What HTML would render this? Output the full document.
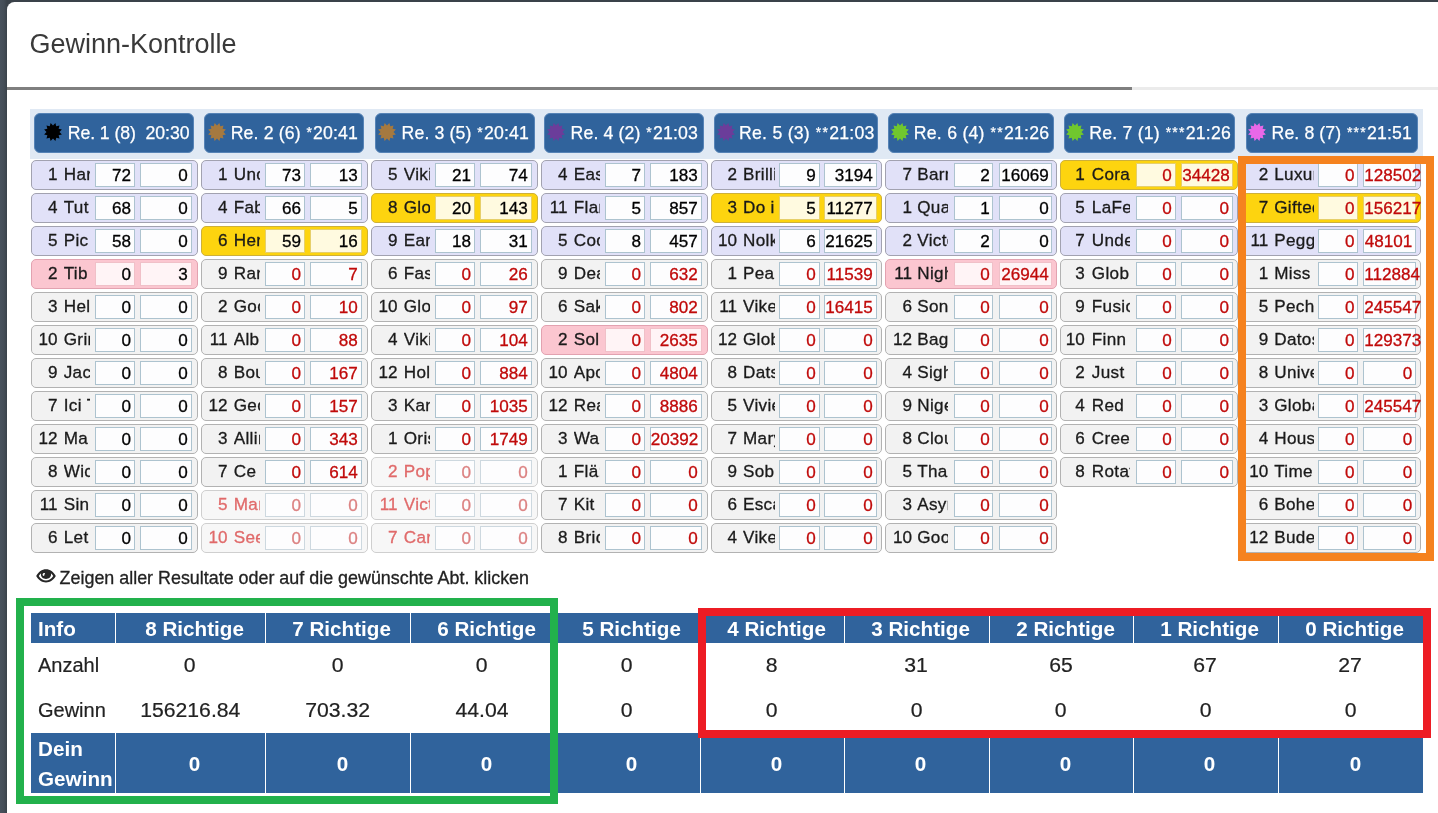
<!DOCTYPE html>
<html lang="de"><head><meta charset="utf-8"><title>Gewinn-Kontrolle</title>
<style>
html,body{margin:0;padding:0}
body{width:1438px;height:813px;overflow:hidden;background:linear-gradient(90deg,#48525d 0,#444d57 4px,#3a424a 7px,#3a424a 100%);font-family:"Liberation Sans",sans-serif;position:relative}
.modal{position:absolute;left:6.9px;top:1.8px;width:1432px;height:812px;background:#fff;border-top-left-radius:7.5px}
.title{position:absolute;left:29.5px;top:28px;font-size:27px;line-height:32px;color:#3a3a3a;white-space:nowrap}
.hr1{position:absolute;left:7px;top:86.5px;width:1125px;height:3.2px;background:#7f7f7f}
.hr2{position:absolute;left:1132px;top:86.5px;width:306px;height:3.2px;background:#ebebeb}
.band{position:absolute;left:30px;top:109px;width:1393.3px;height:50px;background:#e0e9f4}
.hd{position:absolute;top:112.8px;height:40.4px;box-sizing:border-box;background:#30639c;border:1px solid #5683b6;border-radius:6px;color:#fff;font-size:17.7px;white-space:nowrap;-webkit-text-stroke:0.25px}
.hd .st{position:absolute;top:8.2px}
.hd span{position:absolute;top:0;line-height:38.4px}
.hd em{font-style:normal;font-size:14px;letter-spacing:1.25px;position:relative;top:-2px;margin-left:0.6px}
.r{position:absolute;height:29.5px;box-sizing:border-box;border:1px solid #a2a2b0;border-radius:5px;font-size:17.1px;line-height:29.5px;color:#1a1a1a;-webkit-text-stroke:0.3px}
.r i{font-style:normal;position:absolute;top:-1px;height:29.5px;white-space:nowrap;overflow:hidden}
.r i.n{left:0;text-align:right}
.r i.m{margin-left:-1.8px;padding-right:0.3px;letter-spacing:0.35px}
.r b{font-weight:normal;position:absolute;top:1.75px;height:23.75px;line-height:23.5px;box-sizing:border-box;margin-left:-1px;border:1px solid #adc3cf;background:#fdfdfe;text-align:right;padding-right:2.8px;white-space:nowrap;color:#000}
.r.L{background:#e1e1f8}
.r.G{background:#f2f2f2;border-color:#b2b2b2}
.r.P{background:#fbc6d0;border-color:#e2a2b0}
.r.P b{background:#fff4f6;border-color:#f0c0c8}
.r.Y{background:#fdd40f;border-color:#cdb03a}
.r.Y b{background:#fffae0;border-color:#e6cf6a}
.r.F{background:#f7f7f7;border-color:#cfcfcf;color:#e06a6a}
.r.F b{color:#dc8282;border-color:#cdd8df}
.r.red b{color:#c00a0a}
.note{position:absolute;left:59.6px;top:567px;font-size:17.9px;line-height:22px;color:#222;white-space:nowrap;-webkit-text-stroke:0.3px}
.eye{position:absolute;left:35.9px;top:568.9px}
.th,.td,.tf{position:absolute;box-sizing:border-box;text-align:center;white-space:nowrap}
.th{top:613px;height:30px;background:#30639c;color:#fff;font-weight:bold;font-size:19.5px;line-height:30px;border-left:1.3px solid #fff;padding-left:8px}
.td{height:45px;font-size:20px;line-height:45px;color:#222;-webkit-text-stroke:0.2px}
.tf{top:733px;height:60px;background:#30639c;color:#fff;font-weight:bold;font-size:19.5px;line-height:60px;border-left:1.3px solid #fff;padding-left:8px}
.th.f,.tf.f{border-left:0;text-align:left;padding-left:7px}
.td.f{text-align:left;padding-left:7px}
.tf.f{line-height:30px}
.th span,.td span,.tf span{display:inline-block;transform-origin:50% 50%;transform:scaleX(1.06)}
.f span{transform-origin:0 50%}
.td.f span{transform:scaleX(1.0)}
.th span,.tf span{position:relative;top:0.8px}
.box{position:absolute;box-sizing:border-box}
.layer{position:absolute;left:0;top:0;width:1438px;height:813px;will-change:transform}
</style></head><body>
<div class="modal"></div>
<div class="layer">
<div class="title">Gewinn-Kontrolle</div>
<div class="hr1"></div><div class="hr2"></div>
<div class="band"></div>
<div class="hd" style="left:34.40px;width:160.00px"><svg class="st" style="left:7.40px" width="20" height="20" viewBox="0 0 20 20"><polygon fill="#000000" points="12.38,1.11 13.25,4.37 16.51,3.49 15.63,6.75 18.89,7.62 16.50,10.00 18.89,12.38 15.63,13.25 16.51,16.51 13.25,15.63 12.38,18.89 10.00,16.50 7.62,18.89 6.75,15.63 3.49,16.51 4.37,13.25 1.11,12.38 3.50,10.00 1.11,7.62 4.37,6.75 3.49,3.49 6.75,4.37 7.62,1.11 10.00,3.50"/></svg><span style="left:32.30px;letter-spacing:-0.07px">Re. 1 (8)&nbsp; 20:30</span></div>
<div class="r L" style="left:31.00px;top:160.00px;width:166.50px"><i class="n" style="width:25.50px">1</i><i class="m" style="left:33.50px;width:26.00px">Harry</i><b style="left:64.00px;width:39.75px">72</b><b style="left:108.75px;width:51.75px">0</b></div>
<div class="r L" style="left:31.00px;top:193.00px;width:166.50px"><i class="n" style="width:25.50px">4</i><i class="m" style="left:33.50px;width:26.00px">Tut</i><b style="left:64.00px;width:39.75px">68</b><b style="left:108.75px;width:51.75px">0</b></div>
<div class="r L" style="left:31.00px;top:226.00px;width:166.50px"><i class="n" style="width:25.50px">5</i><i class="m" style="left:33.50px;width:26.00px">Pic</i><b style="left:64.00px;width:39.75px">58</b><b style="left:108.75px;width:51.75px">0</b></div>
<div class="r P" style="left:31.00px;top:259.00px;width:166.50px"><i class="n" style="width:25.50px">2</i><i class="m" style="left:33.50px;width:26.00px">Tib</i><b style="left:64.00px;width:39.75px">0</b><b style="left:108.75px;width:51.75px">3</b></div>
<div class="r G" style="left:31.00px;top:292.00px;width:166.50px"><i class="n" style="width:25.50px">3</i><i class="m" style="left:33.50px;width:26.00px">Hel</i><b style="left:64.00px;width:39.75px">0</b><b style="left:108.75px;width:51.75px">0</b></div>
<div class="r G" style="left:31.00px;top:325.00px;width:166.50px"><i class="n" style="width:25.50px">10</i><i class="m" style="left:33.50px;width:26.00px">Grim</i><b style="left:64.00px;width:39.75px">0</b><b style="left:108.75px;width:51.75px">0</b></div>
<div class="r G" style="left:31.00px;top:358.00px;width:166.50px"><i class="n" style="width:25.50px">9</i><i class="m" style="left:33.50px;width:26.00px">Jac</i><b style="left:64.00px;width:39.75px">0</b><b style="left:108.75px;width:51.75px">0</b></div>
<div class="r G" style="left:31.00px;top:391.00px;width:166.50px"><i class="n" style="width:25.50px">7</i><i class="m" style="left:33.50px;width:26.00px">Ici T</i><b style="left:64.00px;width:39.75px">0</b><b style="left:108.75px;width:51.75px">0</b></div>
<div class="r G" style="left:31.00px;top:424.00px;width:166.50px"><i class="n" style="width:25.50px">12</i><i class="m" style="left:33.50px;width:26.00px">Ma</i><b style="left:64.00px;width:39.75px">0</b><b style="left:108.75px;width:51.75px">0</b></div>
<div class="r G" style="left:31.00px;top:457.00px;width:166.50px"><i class="n" style="width:25.50px">8</i><i class="m" style="left:33.50px;width:26.00px">Wic</i><b style="left:64.00px;width:39.75px">0</b><b style="left:108.75px;width:51.75px">0</b></div>
<div class="r G" style="left:31.00px;top:490.00px;width:166.50px"><i class="n" style="width:25.50px">11</i><i class="m" style="left:33.50px;width:26.00px">Sin</i><b style="left:64.00px;width:39.75px">0</b><b style="left:108.75px;width:51.75px">0</b></div>
<div class="r G" style="left:31.00px;top:523.00px;width:166.50px"><i class="n" style="width:25.50px">6</i><i class="m" style="left:33.50px;width:26.00px">Let</i><b style="left:64.00px;width:39.75px">0</b><b style="left:108.75px;width:51.75px">0</b></div>
<div class="hd" style="left:204.40px;width:159.90px"><svg class="st" style="left:1.80px" width="20" height="20" viewBox="0 0 20 20"><polygon fill="#a5793f" points="12.38,1.11 13.25,4.37 16.51,3.49 15.63,6.75 18.89,7.62 16.50,10.00 18.89,12.38 15.63,13.25 16.51,16.51 13.25,15.63 12.38,18.89 10.00,16.50 7.62,18.89 6.75,15.63 3.49,16.51 4.37,13.25 1.11,12.38 3.50,10.00 1.11,7.62 4.37,6.75 3.49,3.49 6.75,4.37 7.62,1.11 10.00,3.50"/></svg><span style="left:25.30px;letter-spacing:0.14px">Re. 2 (6) <em>*</em>20:41</span></div>
<div class="r L" style="left:201.00px;top:160.00px;width:166.50px"><i class="n" style="width:25.50px">1</i><i class="m" style="left:33.50px;width:26.00px">Uno</i><b style="left:64.00px;width:39.75px">73</b><b style="left:108.75px;width:51.75px">13</b></div>
<div class="r L" style="left:201.00px;top:193.00px;width:166.50px"><i class="n" style="width:25.50px">4</i><i class="m" style="left:33.50px;width:26.00px">Fab</i><b style="left:64.00px;width:39.75px">66</b><b style="left:108.75px;width:51.75px">5</b></div>
<div class="r Y" style="left:201.00px;top:226.00px;width:166.50px"><i class="n" style="width:25.50px">6</i><i class="m" style="left:33.50px;width:26.00px">Hen</i><b style="left:64.00px;width:39.75px">59</b><b style="left:108.75px;width:51.75px">16</b></div>
<div class="r G red" style="left:201.00px;top:259.00px;width:166.50px"><i class="n" style="width:25.50px">9</i><i class="m" style="left:33.50px;width:26.00px">Ran</i><b style="left:64.00px;width:39.75px">0</b><b style="left:108.75px;width:51.75px">7</b></div>
<div class="r G red" style="left:201.00px;top:292.00px;width:166.50px"><i class="n" style="width:25.50px">2</i><i class="m" style="left:33.50px;width:26.00px">Goo</i><b style="left:64.00px;width:39.75px">0</b><b style="left:108.75px;width:51.75px">10</b></div>
<div class="r G red" style="left:201.00px;top:325.00px;width:166.50px"><i class="n" style="width:25.50px">11</i><i class="m" style="left:33.50px;width:26.00px">Alba</i><b style="left:64.00px;width:39.75px">0</b><b style="left:108.75px;width:51.75px">88</b></div>
<div class="r G red" style="left:201.00px;top:358.00px;width:166.50px"><i class="n" style="width:25.50px">8</i><i class="m" style="left:33.50px;width:26.00px">Bou</i><b style="left:64.00px;width:39.75px">0</b><b style="left:108.75px;width:51.75px">167</b></div>
<div class="r G red" style="left:201.00px;top:391.00px;width:166.50px"><i class="n" style="width:25.50px">12</i><i class="m" style="left:33.50px;width:26.00px">Geo</i><b style="left:64.00px;width:39.75px">0</b><b style="left:108.75px;width:51.75px">157</b></div>
<div class="r G red" style="left:201.00px;top:424.00px;width:166.50px"><i class="n" style="width:25.50px">3</i><i class="m" style="left:33.50px;width:26.00px">Allin</i><b style="left:64.00px;width:39.75px">0</b><b style="left:108.75px;width:51.75px">343</b></div>
<div class="r G red" style="left:201.00px;top:457.00px;width:166.50px"><i class="n" style="width:25.50px">7</i><i class="m" style="left:33.50px;width:26.00px">Ce</i><b style="left:64.00px;width:39.75px">0</b><b style="left:108.75px;width:51.75px">614</b></div>
<div class="r F" style="left:201.00px;top:490.00px;width:166.50px"><i class="n" style="width:25.50px">5</i><i class="m" style="left:33.50px;width:26.00px">Man</i><b style="left:64.00px;width:39.75px">0</b><b style="left:108.75px;width:51.75px">0</b></div>
<div class="r F" style="left:201.00px;top:523.00px;width:166.50px"><i class="n" style="width:25.50px">10</i><i class="m" style="left:33.50px;width:26.00px">See</i><b style="left:64.00px;width:39.75px">0</b><b style="left:108.75px;width:51.75px">0</b></div>
<div class="hd" style="left:374.50px;width:160.10px"><svg class="st" style="left:1.60px" width="20" height="20" viewBox="0 0 20 20"><polygon fill="#a5793f" points="12.38,1.11 13.25,4.37 16.51,3.49 15.63,6.75 18.89,7.62 16.50,10.00 18.89,12.38 15.63,13.25 16.51,16.51 13.25,15.63 12.38,18.89 10.00,16.50 7.62,18.89 6.75,15.63 3.49,16.51 4.37,13.25 1.11,12.38 3.50,10.00 1.11,7.62 4.37,6.75 3.49,3.49 6.75,4.37 7.62,1.11 10.00,3.50"/></svg><span style="left:26.00px;letter-spacing:0.14px">Re. 3 (5) <em>*</em>20:41</span></div>
<div class="r L" style="left:371.00px;top:160.00px;width:166.50px"><i class="n" style="width:25.50px">5</i><i class="m" style="left:33.50px;width:26.00px">Viki</i><b style="left:64.00px;width:39.75px">21</b><b style="left:108.75px;width:51.75px">74</b></div>
<div class="r Y" style="left:371.00px;top:193.00px;width:166.50px"><i class="n" style="width:25.50px">8</i><i class="m" style="left:33.50px;width:26.00px">Glo</i><b style="left:64.00px;width:39.75px">20</b><b style="left:108.75px;width:51.75px">143</b></div>
<div class="r L" style="left:371.00px;top:226.00px;width:166.50px"><i class="n" style="width:25.50px">9</i><i class="m" style="left:33.50px;width:26.00px">Ear</i><b style="left:64.00px;width:39.75px">18</b><b style="left:108.75px;width:51.75px">31</b></div>
<div class="r G red" style="left:371.00px;top:259.00px;width:166.50px"><i class="n" style="width:25.50px">6</i><i class="m" style="left:33.50px;width:26.00px">Fas</i><b style="left:64.00px;width:39.75px">0</b><b style="left:108.75px;width:51.75px">26</b></div>
<div class="r G red" style="left:371.00px;top:292.00px;width:166.50px"><i class="n" style="width:25.50px">10</i><i class="m" style="left:33.50px;width:26.00px">Glo</i><b style="left:64.00px;width:39.75px">0</b><b style="left:108.75px;width:51.75px">97</b></div>
<div class="r G red" style="left:371.00px;top:325.00px;width:166.50px"><i class="n" style="width:25.50px">4</i><i class="m" style="left:33.50px;width:26.00px">Viki</i><b style="left:64.00px;width:39.75px">0</b><b style="left:108.75px;width:51.75px">104</b></div>
<div class="r G red" style="left:371.00px;top:358.00px;width:166.50px"><i class="n" style="width:25.50px">12</i><i class="m" style="left:33.50px;width:26.00px">Hol</i><b style="left:64.00px;width:39.75px">0</b><b style="left:108.75px;width:51.75px">884</b></div>
<div class="r G red" style="left:371.00px;top:391.00px;width:166.50px"><i class="n" style="width:25.50px">3</i><i class="m" style="left:33.50px;width:26.00px">Kar</i><b style="left:64.00px;width:39.75px">0</b><b style="left:108.75px;width:51.75px">1035</b></div>
<div class="r G red" style="left:371.00px;top:424.00px;width:166.50px"><i class="n" style="width:25.50px">1</i><i class="m" style="left:33.50px;width:26.00px">Oris</i><b style="left:64.00px;width:39.75px">0</b><b style="left:108.75px;width:51.75px">1749</b></div>
<div class="r F" style="left:371.00px;top:457.00px;width:166.50px"><i class="n" style="width:25.50px">2</i><i class="m" style="left:33.50px;width:26.00px">Pop</i><b style="left:64.00px;width:39.75px">0</b><b style="left:108.75px;width:51.75px">0</b></div>
<div class="r F" style="left:371.00px;top:490.00px;width:166.50px"><i class="n" style="width:25.50px">11</i><i class="m" style="left:33.50px;width:26.00px">Vict</i><b style="left:64.00px;width:39.75px">0</b><b style="left:108.75px;width:51.75px">0</b></div>
<div class="r F" style="left:371.00px;top:523.00px;width:166.50px"><i class="n" style="width:25.50px">7</i><i class="m" style="left:33.50px;width:26.00px">Car</i><b style="left:64.00px;width:39.75px">0</b><b style="left:108.75px;width:51.75px">0</b></div>
<div class="hd" style="left:543.80px;width:160.40px"><svg class="st" style="left:1.60px" width="20" height="20" viewBox="0 0 20 20"><polygon fill="#6b3d9a" points="12.38,1.11 13.25,4.37 16.51,3.49 15.63,6.75 18.89,7.62 16.50,10.00 18.89,12.38 15.63,13.25 16.51,16.51 13.25,15.63 12.38,18.89 10.00,16.50 7.62,18.89 6.75,15.63 3.49,16.51 4.37,13.25 1.11,12.38 3.50,10.00 1.11,7.62 4.37,6.75 3.49,3.49 6.75,4.37 7.62,1.11 10.00,3.50"/></svg><span style="left:25.75px;letter-spacing:0.14px">Re. 4 (2) <em>*</em>21:03</span></div>
<div class="r L" style="left:541.00px;top:160.00px;width:166.50px"><i class="n" style="width:25.50px">4</i><i class="m" style="left:33.50px;width:26.00px">Eas</i><b style="left:64.00px;width:39.75px">7</b><b style="left:108.75px;width:51.75px">183</b></div>
<div class="r L" style="left:541.00px;top:193.00px;width:166.50px"><i class="n" style="width:25.50px">11</i><i class="m" style="left:33.50px;width:26.00px">Flan</i><b style="left:64.00px;width:39.75px">5</b><b style="left:108.75px;width:51.75px">857</b></div>
<div class="r L" style="left:541.00px;top:226.00px;width:166.50px"><i class="n" style="width:25.50px">5</i><i class="m" style="left:33.50px;width:26.00px">Coo</i><b style="left:64.00px;width:39.75px">8</b><b style="left:108.75px;width:51.75px">457</b></div>
<div class="r G red" style="left:541.00px;top:259.00px;width:166.50px"><i class="n" style="width:25.50px">9</i><i class="m" style="left:33.50px;width:26.00px">Dea</i><b style="left:64.00px;width:39.75px">0</b><b style="left:108.75px;width:51.75px">632</b></div>
<div class="r G red" style="left:541.00px;top:292.00px;width:166.50px"><i class="n" style="width:25.50px">6</i><i class="m" style="left:33.50px;width:26.00px">Sak</i><b style="left:64.00px;width:39.75px">0</b><b style="left:108.75px;width:51.75px">802</b></div>
<div class="r P red" style="left:541.00px;top:325.00px;width:166.50px"><i class="n" style="width:25.50px">2</i><i class="m" style="left:33.50px;width:26.00px">Sol</i><b style="left:64.00px;width:39.75px">0</b><b style="left:108.75px;width:51.75px">2635</b></div>
<div class="r G red" style="left:541.00px;top:358.00px;width:166.50px"><i class="n" style="width:25.50px">10</i><i class="m" style="left:33.50px;width:26.00px">Apo</i><b style="left:64.00px;width:39.75px">0</b><b style="left:108.75px;width:51.75px">4804</b></div>
<div class="r G red" style="left:541.00px;top:391.00px;width:166.50px"><i class="n" style="width:25.50px">12</i><i class="m" style="left:33.50px;width:26.00px">Rea</i><b style="left:64.00px;width:39.75px">0</b><b style="left:108.75px;width:51.75px">8886</b></div>
<div class="r G red" style="left:541.00px;top:424.00px;width:166.50px"><i class="n" style="width:25.50px">3</i><i class="m" style="left:33.50px;width:26.00px">Wa</i><b style="left:64.00px;width:39.75px">0</b><b style="left:108.75px;width:51.75px">20392</b></div>
<div class="r G red" style="left:541.00px;top:457.00px;width:166.50px"><i class="n" style="width:25.50px">1</i><i class="m" style="left:33.50px;width:26.00px">Flä:</i><b style="left:64.00px;width:39.75px">0</b><b style="left:108.75px;width:51.75px">0</b></div>
<div class="r G red" style="left:541.00px;top:490.00px;width:166.50px"><i class="n" style="width:25.50px">7</i><i class="m" style="left:33.50px;width:26.00px">Kit</i><b style="left:64.00px;width:39.75px">0</b><b style="left:108.75px;width:51.75px">0</b></div>
<div class="r G red" style="left:541.00px;top:523.00px;width:166.50px"><i class="n" style="width:25.50px">8</i><i class="m" style="left:33.50px;width:26.00px">Bric</i><b style="left:64.00px;width:39.75px">0</b><b style="left:108.75px;width:51.75px">0</b></div>
<div class="hd" style="left:713.50px;width:164.70px"><svg class="st" style="left:1.25px" width="20" height="20" viewBox="0 0 20 20"><polygon fill="#6b3d9a" points="12.38,1.11 13.25,4.37 16.51,3.49 15.63,6.75 18.89,7.62 16.50,10.00 18.89,12.38 15.63,13.25 16.51,16.51 13.25,15.63 12.38,18.89 10.00,16.50 7.62,18.89 6.75,15.63 3.49,16.51 4.37,13.25 1.11,12.38 3.50,10.00 1.11,7.62 4.37,6.75 3.49,3.49 6.75,4.37 7.62,1.11 10.00,3.50"/></svg><span style="left:24.50px;letter-spacing:0.24px">Re. 5 (3) <em>**</em>21:03</span></div>
<div class="r L" style="left:711.25px;top:160.00px;width:170.50px"><i class="n" style="width:24.75px">2</i><i class="m" style="left:32.50px;width:31.25px">Brillia</i><b style="left:67.50px;width:40.75px">9</b><b style="left:112.75px;width:52.50px">3194</b></div>
<div class="r Y" style="left:711.25px;top:193.00px;width:170.50px"><i class="n" style="width:24.75px">3</i><i class="m" style="left:32.50px;width:31.25px">Do i</i><b style="left:67.50px;width:40.75px">5</b><b style="left:112.75px;width:52.50px">11277</b></div>
<div class="r L" style="left:711.25px;top:226.00px;width:170.50px"><i class="n" style="width:24.75px">10</i><i class="m" style="left:32.50px;width:31.25px">Nolk</i><b style="left:67.50px;width:40.75px">6</b><b style="left:112.75px;width:52.50px">21625</b></div>
<div class="r G red" style="left:711.25px;top:259.00px;width:170.50px"><i class="n" style="width:24.75px">1</i><i class="m" style="left:32.50px;width:31.25px">Pea</i><b style="left:67.50px;width:40.75px">0</b><b style="left:112.75px;width:52.50px">11539</b></div>
<div class="r G red" style="left:711.25px;top:292.00px;width:170.50px"><i class="n" style="width:24.75px">11</i><i class="m" style="left:32.50px;width:31.25px">Vike</i><b style="left:67.50px;width:40.75px">0</b><b style="left:112.75px;width:52.50px">16415</b></div>
<div class="r G red" style="left:711.25px;top:325.00px;width:170.50px"><i class="n" style="width:24.75px">12</i><i class="m" style="left:32.50px;width:31.25px">Glob</i><b style="left:67.50px;width:40.75px">0</b><b style="left:112.75px;width:52.50px">0</b></div>
<div class="r G red" style="left:711.25px;top:358.00px;width:170.50px"><i class="n" style="width:24.75px">8</i><i class="m" style="left:32.50px;width:31.25px">Dats</i><b style="left:67.50px;width:40.75px">0</b><b style="left:112.75px;width:52.50px">0</b></div>
<div class="r G red" style="left:711.25px;top:391.00px;width:170.50px"><i class="n" style="width:24.75px">5</i><i class="m" style="left:32.50px;width:31.25px">Vivie</i><b style="left:67.50px;width:40.75px">0</b><b style="left:112.75px;width:52.50px">0</b></div>
<div class="r G red" style="left:711.25px;top:424.00px;width:170.50px"><i class="n" style="width:24.75px">7</i><i class="m" style="left:32.50px;width:31.25px">Mary</i><b style="left:67.50px;width:40.75px">0</b><b style="left:112.75px;width:52.50px">0</b></div>
<div class="r G red" style="left:711.25px;top:457.00px;width:170.50px"><i class="n" style="width:24.75px">9</i><i class="m" style="left:32.50px;width:31.25px">Sob</i><b style="left:67.50px;width:40.75px">0</b><b style="left:112.75px;width:52.50px">0</b></div>
<div class="r G red" style="left:711.25px;top:490.00px;width:170.50px"><i class="n" style="width:24.75px">6</i><i class="m" style="left:32.50px;width:31.25px">Esca</i><b style="left:67.50px;width:40.75px">0</b><b style="left:112.75px;width:52.50px">0</b></div>
<div class="r G red" style="left:711.25px;top:523.00px;width:170.50px"><i class="n" style="width:24.75px">4</i><i class="m" style="left:32.50px;width:31.25px">Vike</i><b style="left:67.50px;width:40.75px">0</b><b style="left:112.75px;width:52.50px">0</b></div>
<div class="hd" style="left:888.25px;width:165.75px"><svg class="st" style="left:1.00px" width="20" height="20" viewBox="0 0 20 20"><polygon fill="#70c72e" points="12.38,1.11 13.25,4.37 16.51,3.49 15.63,6.75 18.89,7.62 16.50,10.00 18.89,12.38 15.63,13.25 16.51,16.51 13.25,15.63 12.38,18.89 10.00,16.50 7.62,18.89 6.75,15.63 3.49,16.51 4.37,13.25 1.11,12.38 3.50,10.00 1.11,7.62 4.37,6.75 3.49,3.49 6.75,4.37 7.62,1.11 10.00,3.50"/></svg><span style="left:24.50px;letter-spacing:0.24px">Re. 6 (4) <em>**</em>21:26</span></div>
<div class="r L" style="left:885.30px;top:160.00px;width:171.30px"><i class="n" style="width:25.70px">7</i><i class="m" style="left:32.70px;width:31.00px">Barn</i><b style="left:68.70px;width:39.50px">2</b><b style="left:113.70px;width:53.50px">16069</b></div>
<div class="r L" style="left:885.30px;top:193.00px;width:171.30px"><i class="n" style="width:25.70px">1</i><i class="m" style="left:32.70px;width:31.00px">Qua</i><b style="left:68.70px;width:39.50px">1</b><b style="left:113.70px;width:53.50px">0</b></div>
<div class="r L" style="left:885.30px;top:226.00px;width:171.30px"><i class="n" style="width:25.70px">2</i><i class="m" style="left:32.70px;width:31.00px">Victo</i><b style="left:68.70px;width:39.50px">2</b><b style="left:113.70px;width:53.50px">0</b></div>
<div class="r P red" style="left:885.30px;top:259.00px;width:171.30px"><i class="n" style="width:25.70px">11</i><i class="m" style="left:32.70px;width:31.00px">Nigh</i><b style="left:68.70px;width:39.50px">0</b><b style="left:113.70px;width:53.50px">26944</b></div>
<div class="r G red" style="left:885.30px;top:292.00px;width:171.30px"><i class="n" style="width:25.70px">6</i><i class="m" style="left:32.70px;width:31.00px">Son</i><b style="left:68.70px;width:39.50px">0</b><b style="left:113.70px;width:53.50px">0</b></div>
<div class="r G red" style="left:885.30px;top:325.00px;width:171.30px"><i class="n" style="width:25.70px">12</i><i class="m" style="left:32.70px;width:31.00px">Bag</i><b style="left:68.70px;width:39.50px">0</b><b style="left:113.70px;width:53.50px">0</b></div>
<div class="r G red" style="left:885.30px;top:358.00px;width:171.30px"><i class="n" style="width:25.70px">4</i><i class="m" style="left:32.70px;width:31.00px">Sigh</i><b style="left:68.70px;width:39.50px">0</b><b style="left:113.70px;width:53.50px">0</b></div>
<div class="r G red" style="left:885.30px;top:391.00px;width:171.30px"><i class="n" style="width:25.70px">9</i><i class="m" style="left:32.70px;width:31.00px">Nige</i><b style="left:68.70px;width:39.50px">0</b><b style="left:113.70px;width:53.50px">0</b></div>
<div class="r G red" style="left:885.30px;top:424.00px;width:171.30px"><i class="n" style="width:25.70px">8</i><i class="m" style="left:32.70px;width:31.00px">Clou</i><b style="left:68.70px;width:39.50px">0</b><b style="left:113.70px;width:53.50px">0</b></div>
<div class="r G red" style="left:885.30px;top:457.00px;width:171.30px"><i class="n" style="width:25.70px">5</i><i class="m" style="left:32.70px;width:31.00px">Tha</i><b style="left:68.70px;width:39.50px">0</b><b style="left:113.70px;width:53.50px">0</b></div>
<div class="r G red" style="left:885.30px;top:490.00px;width:171.30px"><i class="n" style="width:25.70px">3</i><i class="m" style="left:32.70px;width:31.00px">Asyn</i><b style="left:68.70px;width:39.50px">0</b><b style="left:113.70px;width:53.50px">0</b></div>
<div class="r G red" style="left:885.30px;top:523.00px;width:171.30px"><i class="n" style="width:25.70px">10</i><i class="m" style="left:32.70px;width:31.00px">Goo</i><b style="left:68.70px;width:39.50px">0</b><b style="left:113.70px;width:53.50px">0</b></div>
<div class="hd" style="left:1063.50px;width:171.70px"><svg class="st" style="left:0.80px" width="20" height="20" viewBox="0 0 20 20"><polygon fill="#70c72e" points="12.38,1.11 13.25,4.37 16.51,3.49 15.63,6.75 18.89,7.62 16.50,10.00 18.89,12.38 15.63,13.25 16.51,16.51 13.25,15.63 12.38,18.89 10.00,16.50 7.62,18.89 6.75,15.63 3.49,16.51 4.37,13.25 1.11,12.38 3.50,10.00 1.11,7.62 4.37,6.75 3.49,3.49 6.75,4.37 7.62,1.11 10.00,3.50"/></svg><span style="left:24.80px;letter-spacing:0.20px">Re. 7 (1) <em>***</em>21:26</span></div>
<div class="r Y red" style="left:1060.20px;top:160.00px;width:177.70px"><i class="n" style="width:23.50px">1</i><i class="m" style="left:32.40px;width:38.20px">Cora</i><b style="left:75.80px;width:39.60px">0</b><b style="left:121.00px;width:51.70px">34428</b></div>
<div class="r L red" style="left:1060.20px;top:193.00px;width:177.70px"><i class="n" style="width:23.50px">5</i><i class="m" style="left:32.40px;width:38.20px">LaFe</i><b style="left:75.80px;width:39.60px">0</b><b style="left:121.00px;width:51.70px">0</b></div>
<div class="r L red" style="left:1060.20px;top:226.00px;width:177.70px"><i class="n" style="width:23.50px">7</i><i class="m" style="left:32.40px;width:38.20px">Unde</i><b style="left:75.80px;width:39.60px">0</b><b style="left:121.00px;width:51.70px">0</b></div>
<div class="r G red" style="left:1060.20px;top:259.00px;width:177.70px"><i class="n" style="width:23.50px">3</i><i class="m" style="left:32.40px;width:38.20px">Glob</i><b style="left:75.80px;width:39.60px">0</b><b style="left:121.00px;width:51.70px">0</b></div>
<div class="r G red" style="left:1060.20px;top:292.00px;width:177.70px"><i class="n" style="width:23.50px">9</i><i class="m" style="left:32.40px;width:38.20px">Fusio</i><b style="left:75.80px;width:39.60px">0</b><b style="left:121.00px;width:51.70px">0</b></div>
<div class="r G red" style="left:1060.20px;top:325.00px;width:177.70px"><i class="n" style="width:23.50px">10</i><i class="m" style="left:32.40px;width:38.20px">Finn</i><b style="left:75.80px;width:39.60px">0</b><b style="left:121.00px;width:51.70px">0</b></div>
<div class="r G red" style="left:1060.20px;top:358.00px;width:177.70px"><i class="n" style="width:23.50px">2</i><i class="m" style="left:32.40px;width:38.20px">Just</i><b style="left:75.80px;width:39.60px">0</b><b style="left:121.00px;width:51.70px">0</b></div>
<div class="r G red" style="left:1060.20px;top:391.00px;width:177.70px"><i class="n" style="width:23.50px">4</i><i class="m" style="left:32.40px;width:38.20px">Red</i><b style="left:75.80px;width:39.60px">0</b><b style="left:121.00px;width:51.70px">0</b></div>
<div class="r G red" style="left:1060.20px;top:424.00px;width:177.70px"><i class="n" style="width:23.50px">6</i><i class="m" style="left:32.40px;width:38.20px">Cree</i><b style="left:75.80px;width:39.60px">0</b><b style="left:121.00px;width:51.70px">0</b></div>
<div class="r G red" style="left:1060.20px;top:457.00px;width:177.70px"><i class="n" style="width:23.50px">8</i><i class="m" style="left:32.40px;width:38.20px">Rotat</i><b style="left:75.80px;width:39.60px">0</b><b style="left:121.00px;width:51.70px">0</b></div>
<div class="hd" style="left:1245.50px;width:172.00px"><svg class="st" style="left:0.50px" width="20" height="20" viewBox="0 0 20 20"><polygon fill="#e868e8" points="12.38,1.11 13.25,4.37 16.51,3.49 15.63,6.75 18.89,7.62 16.50,10.00 18.89,12.38 15.63,13.25 16.51,16.51 13.25,15.63 12.38,18.89 10.00,16.50 7.62,18.89 6.75,15.63 3.49,16.51 4.37,13.25 1.11,12.38 3.50,10.00 1.11,7.62 4.37,6.75 3.49,3.49 6.75,4.37 7.62,1.11 10.00,3.50"/></svg><span style="left:25.00px;letter-spacing:0.11px">Re. 8 (7) <em>***</em>21:51</span></div>
<div class="r L red" style="left:1241.50px;top:160.00px;width:179.50px"><i class="n" style="width:25.70px">2</i><i class="m" style="left:33.50px;width:39.00px">Luxur</i><b style="left:76.70px;width:40.20px">0</b><b style="left:121.70px;width:52.80px">128502</b></div>
<div class="r Y red" style="left:1241.50px;top:193.00px;width:179.50px"><i class="n" style="width:25.70px">7</i><i class="m" style="left:33.50px;width:39.00px">Gifted</i><b style="left:76.70px;width:40.20px">0</b><b style="left:121.70px;width:52.80px">156217</b></div>
<div class="r L red" style="left:1241.50px;top:226.00px;width:179.50px"><i class="n" style="width:25.70px">11</i><i class="m" style="left:33.50px;width:39.00px">Pegg</i><b style="left:76.70px;width:40.20px">0</b><b style="left:121.70px;width:52.80px">48101</b></div>
<div class="r G red" style="left:1241.50px;top:259.00px;width:179.50px"><i class="n" style="width:25.70px">1</i><i class="m" style="left:33.50px;width:39.00px">Miss</i><b style="left:76.70px;width:40.20px">0</b><b style="left:121.70px;width:52.80px">112884</b></div>
<div class="r G red" style="left:1241.50px;top:292.00px;width:179.50px"><i class="n" style="width:25.70px">5</i><i class="m" style="left:33.50px;width:39.00px">Pech</i><b style="left:76.70px;width:40.20px">0</b><b style="left:121.70px;width:52.80px">245547</b></div>
<div class="r G red" style="left:1241.50px;top:325.00px;width:179.50px"><i class="n" style="width:25.70px">9</i><i class="m" style="left:33.50px;width:39.00px">Datos</i><b style="left:76.70px;width:40.20px">0</b><b style="left:121.70px;width:52.80px">129373</b></div>
<div class="r G red" style="left:1241.50px;top:358.00px;width:179.50px"><i class="n" style="width:25.70px">8</i><i class="m" style="left:33.50px;width:39.00px">Unive</i><b style="left:76.70px;width:40.20px">0</b><b style="left:121.70px;width:52.80px">0</b></div>
<div class="r G red" style="left:1241.50px;top:391.00px;width:179.50px"><i class="n" style="width:25.70px">3</i><i class="m" style="left:33.50px;width:39.00px">Globa</i><b style="left:76.70px;width:40.20px">0</b><b style="left:121.70px;width:52.80px">245547</b></div>
<div class="r G red" style="left:1241.50px;top:424.00px;width:179.50px"><i class="n" style="width:25.70px">4</i><i class="m" style="left:33.50px;width:39.00px">Hous</i><b style="left:76.70px;width:40.20px">0</b><b style="left:121.70px;width:52.80px">0</b></div>
<div class="r G red" style="left:1241.50px;top:457.00px;width:179.50px"><i class="n" style="width:25.70px">10</i><i class="m" style="left:33.50px;width:39.00px">Time</i><b style="left:76.70px;width:40.20px">0</b><b style="left:121.70px;width:52.80px">0</b></div>
<div class="r G red" style="left:1241.50px;top:490.00px;width:179.50px"><i class="n" style="width:25.70px">6</i><i class="m" style="left:33.50px;width:39.00px">Bohe</i><b style="left:76.70px;width:40.20px">0</b><b style="left:121.70px;width:52.80px">0</b></div>
<div class="r G red" style="left:1241.50px;top:523.00px;width:179.50px"><i class="n" style="width:25.70px">12</i><i class="m" style="left:33.50px;width:39.00px">Bude</i><b style="left:76.70px;width:40.20px">0</b><b style="left:121.70px;width:52.80px">0</b></div>
<svg class="eye" width="20" height="14" preserveAspectRatio="none" viewBox="0 0 21 15"><path fill="#262626" fill-rule="evenodd" d="M0.2 7.6C2.600 3.200 6.200 0.400 10.500 0.400s7.900 2.800 10.300 7.200c-2.400 4.200-6 6.900-10.300 6.900S2.600 11.800 0.200 7.600zM2.900 7.500c1.900 3 4.500 4.800 7.600 4.800s5.700-1.800 7.600-4.800c-0.700-1.100-1.500-2.100-2.500-2.900 0.100 0.400 0.200 0.800 0.200 1.300 0 2.700-2.300 4.700-5.300 4.700S5.200 8.600 5.200 5.900c0-0.500 0.100-0.900 0.200-1.300C4.400 5.400 3.600 6.400 2.900 7.500z M8.300 4.300c-0.900 0.300-1.500 1.200-1.400 2.200 0.100 0.500 0.500 0.900 1 0.900 0.600 0 0.900-0.500 0.900-1 0-0.700 0.300-1.300 0.800-1.700-0.400-0.300-0.900-0.500-1.300-0.400z"/></svg>
<div class="note">Zeigen aller Resultate oder auf die gewünschte Abt. klicken</div>
<div class="th f" style="left:31.00px;width:83.60px"><span>Info</span></div>
<div class="td f" style="left:31.00px;width:83.60px;top:643px"><span>Anzahl</span></div>
<div class="td f" style="left:31.00px;width:83.60px;top:688px"><span>Gewinn</span></div>
<div class="tf f" style="left:31.00px;width:83.60px"><span>Dein<br>Gewinn</span></div>
<div class="th" style="left:114.60px;width:150.80px"><span>8 Richtige</span></div>
<div class="td" style="left:114.60px;width:150.80px;top:643px"><span>0</span></div>
<div class="td" style="left:114.60px;width:150.80px;top:688px"><span>156216.84</span></div>
<div class="tf" style="left:114.60px;width:150.80px"><span>0</span></div>
<div class="th" style="left:265.40px;width:144.20px"><span>7 Richtige</span></div>
<div class="td" style="left:265.40px;width:144.20px;top:643px"><span>0</span></div>
<div class="td" style="left:265.40px;width:144.20px;top:688px"><span>703.32</span></div>
<div class="tf" style="left:265.40px;width:144.20px"><span>0</span></div>
<div class="th" style="left:409.60px;width:144.60px"><span>6 Richtige</span></div>
<div class="td" style="left:409.60px;width:144.60px;top:643px"><span>0</span></div>
<div class="td" style="left:409.60px;width:144.60px;top:688px"><span>44.04</span></div>
<div class="tf" style="left:409.60px;width:144.60px"><span>0</span></div>
<div class="th" style="left:554.20px;width:145.40px"><span>5 Richtige</span></div>
<div class="td" style="left:554.20px;width:145.40px;top:643px"><span>0</span></div>
<div class="td" style="left:554.20px;width:145.40px;top:688px"><span>0</span></div>
<div class="tf" style="left:554.20px;width:145.40px"><span>0</span></div>
<div class="th" style="left:699.60px;width:144.00px"><span>4 Richtige</span></div>
<div class="td" style="left:699.60px;width:144.00px;top:643px"><span>8</span></div>
<div class="td" style="left:699.60px;width:144.00px;top:688px"><span>0</span></div>
<div class="tf" style="left:699.60px;width:144.00px"><span>0</span></div>
<div class="th" style="left:843.60px;width:145.10px"><span>3 Richtige</span></div>
<div class="td" style="left:843.60px;width:145.10px;top:643px"><span>31</span></div>
<div class="td" style="left:843.60px;width:145.10px;top:688px"><span>0</span></div>
<div class="tf" style="left:843.60px;width:145.10px"><span>0</span></div>
<div class="th" style="left:988.70px;width:144.30px"><span>2 Richtige</span></div>
<div class="td" style="left:988.70px;width:144.30px;top:643px"><span>65</span></div>
<div class="td" style="left:988.70px;width:144.30px;top:688px"><span>0</span></div>
<div class="tf" style="left:988.70px;width:144.30px"><span>0</span></div>
<div class="th" style="left:1133.00px;width:144.80px"><span>1 Richtige</span></div>
<div class="td" style="left:1133.00px;width:144.80px;top:643px"><span>67</span></div>
<div class="td" style="left:1133.00px;width:144.80px;top:688px"><span>0</span></div>
<div class="tf" style="left:1133.00px;width:144.80px"><span>0</span></div>
<div class="th" style="left:1277.80px;width:145.50px"><span>0 Richtige</span></div>
<div class="td" style="left:1277.80px;width:145.50px;top:643px"><span>27</span></div>
<div class="td" style="left:1277.80px;width:145.50px;top:688px"><span>0</span></div>
<div class="tf" style="left:1277.80px;width:145.50px"><span>0</span></div>
<div class="box" style="left:16px;top:598px;width:541.5px;height:205.5px;border:8px solid #22b14c"></div>
<div class="box" style="left:698.4px;top:608.4px;width:732.8px;height:129.2px;border:8px solid #ed1c24"></div>
<div class="box" style="left:1238px;top:155.8px;width:196px;height:405.2px;border:8px solid #f5821f"></div>
</div>
</body></html>
